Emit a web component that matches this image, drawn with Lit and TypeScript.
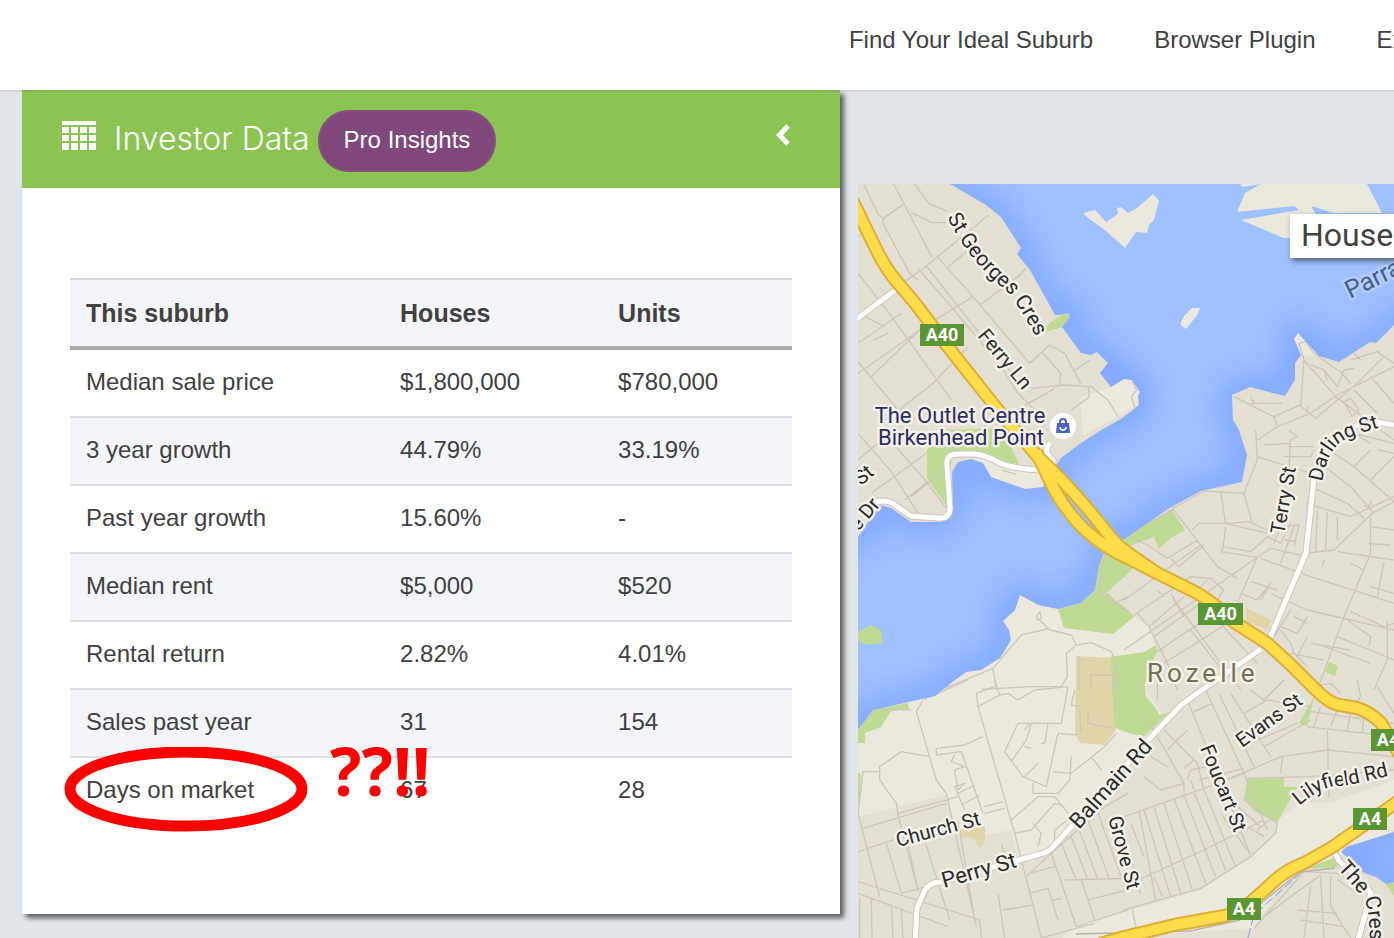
import { LitElement, html, css, svg } from "lit";
import { customElement } from "lit/decorators.js";

const SANS = css`"Liberation Sans", Arial, sans-serif`;

@customElement("site-header")
class SiteHeader extends LitElement {
  static styles = css`
    :host {
      display: block;
      position: relative;
      z-index: 2;
      background: #fff;
      box-shadow: 0 2px 0 rgba(40, 60, 60, 0.08);
      overflow: clip;
      overflow-clip-margin: 2px;
    }
    .nav {
      display: flex;
      gap: 61px;
      height: 90px;
      padding-left: 60.9%;
      font: 24px/80px ${SANS};
      white-space: nowrap;
    }
    .link {
      color: #414141;
      text-decoration: none;
    }
  `;

  render() {
    return html`<nav class="nav" aria-label="Main">
      ${["Find Your Ideal Suburb", "Browser Plugin", "Explore"].map(
        (t) => html`<a class="link" href="#">${t}</a>`
      )}
    </nav>`;
  }
}

const ROWS = [
  ["Median sale price", "$1,800,000", "$780,000"],
  ["3 year growth", "44.79%", "33.19%"],
  ["Past year growth", "15.60%", "-"],
  ["Median rent", "$5,000", "$520"],
  ["Rental return", "2.82%", "4.01%"],
  ["Sales past year", "31", "154"],
  ["Days on market", "67", "28"],
];

@customElement("investor-panel")
class InvestorPanel extends LitElement {
  static styles = css`
    :host {
      display: block;
      background: #fff;
      box-shadow: 4px 4px 5px rgba(0, 0, 0, 0.6);
      font-family: ${SANS};
      color: #414141;
    }
    .bar {
      display: flex;
      align-items: center;
      height: 98px;
      padding: 0 48px 0 40px;
      box-sizing: border-box;
      background: #8bc453;
      color: #fff;
    }
    .grid {
      flex: none;
      margin-bottom: 8px;
    }
    .title {
      margin: 0 8px 0 18px;
      font: 300 32px/44px Inter, ${SANS};
      white-space: nowrap;
    }
    .pro {
      height: 62px;
      margin-top: 4px;
      padding: 0 24px 2px;
      border: 2px solid #87507c;
      border-radius: 31px;
      background: #80477a;
      color: #fff;
      font: 24px/28px ${SANS};
      white-space: nowrap;
    }
    .collapse {
      display: flex;
      margin: 0 0 8px auto;
      padding: 0;
      border: 0;
      background: none;
      color: inherit;
    }
    .body {
      padding: 90px 48px;
    }
    .table {
      width: 100%;
      table-layout: fixed;
      border-collapse: separate;
      border-spacing: 0;
      font-size: 24px;
      line-height: 28px;
    }
    .head {
      box-sizing: border-box;
      padding: 19px 16px;
      text-align: left;
      border-top: 2px solid #d5d8dc;
      border-bottom: 4px solid #aaa;
      background: #f4f5f9;
      font-size: 25px;
    }
    .first {
      width: 43.5%;
    }
    .second {
      width: 30.2%;
    }
    .cell {
      position: relative;
      padding: 18px 16px 20px;
      border-bottom: 2px solid #dcdfe3;
      font-weight: normal;
      text-align: left;
    }
    .row:nth-child(even) .cell {
      background: #f4f5f9;
    }
    .row:last-child .cell {
      border-bottom: 0;
    }
    .ring {
      position: absolute;
      left: -6px;
      top: -11px;
      z-index: 1;
    }
    .shout {
      position: absolute;
      left: 260px;
      top: -24px;
      z-index: 1;
      color: #f00;
      font: 700 66px/72px "Open Sans", sans-serif;
    }
  `;

  render() {
    const cells = [0, 1, 2].flatMap((r) =>
      [0, 1, 2, 3].map(
        (c) => svg`<rect x=${c * 9} y=${6 + r * 8} width="7" height=${r === 2 ? 7 : 6} />`
      )
    );
    return html`
      <header class="bar">
        <svg class="grid" width="34" height="29" fill="#fff" aria-hidden="true">
          <rect width="34" height="4" />
          ${cells}
        </svg>
        <h2 class="title">Investor Data</h2>
        <button class="pro" type="button">Pro Insights</button>
        <button class="collapse" type="button" aria-label="Collapse panel">
          <svg width="18" height="22" viewBox="0 0 18 22" fill="none" stroke="#fff" stroke-width="5">
            <path d="M14 2 5.500 11 14 20" />
          </svg>
        </button>
      </header>
      <div class="body">
        <table class="table">
          <thead>
            <tr>
              <th class="head first" scope="col">This suburb</th>
              <th class="head second" scope="col">Houses</th>
              <th class="head" scope="col">Units</th>
            </tr>
          </thead>
          <tbody>
            ${ROWS.map(
              ([name, houses, units], i) => html`<tr class="row">
                <th class="cell" scope="row">
                  ${name}${i === ROWS.length - 1
                    ? html`<svg class="ring" width="244" height="86" fill="none" stroke="#f00" stroke-width="11" aria-hidden="true">
                          <ellipse cx="122" cy="42" rx="116" ry="37" />
                        </svg>
                        <span class="shout">??!!</span>`
                    : ""}
                </th>
                <td class="cell">${houses}</td>
                <td class="cell">${units}</td>
              </tr>`
            )}
          </tbody>
        </table>
      </div>
    `;
  }
}

const WATER =
  "M950 184 986 205 1001 217 1021 248 1017 254 1030 270 1055 315 1070 314 1062 327 1081 353 1091 355 1097 352 1108 363 1100 373 1111 387 1124 379 1132 380 1140 392 1138 396 1139 405 1124 417 1098 432 1081 443 1061 458 1053 470 1043 487 1025 489 991 477 983 463 971 459 958 462 952 472 953 512 940 522 911 522 891 508 880 505 858 537 800 560 800 735 858 730 873 710 935 696 955 680 966 672 981 670 1000 658 1011 640 1009 630 1003 621 1015 610 1020 595 1038 605 1058 609 1081 603 1095 590 1099 565 1104 553 1126 538 1171 507 1201 491 1242 482 1247 455 1239 430 1233 420 1232 395 1250 387 1285 396 1295 380 1295 363 1301 355 1294 339 1298 333 1319 356 1339 362 1370 342 1376 343 1394 325 1450 290 1450 130 920 130Z";
const BAY = "M1450 815 1394 832 1346 847 1341 852 1354 863 1364 873 1376 877 1386 884 1450 870Z";

const LIGHT = [
  "M858 817 858 725 955 680 1003 655 1011 640 1000 620 1020 593 1060 606 1064 628 1113 634 1132 615 1149 627 1157 650 1146 690 1164 716 1071 827 1048 852 1018 857 1011 830 985 835 960 838 946 795Z",
  "M1062 938 1076 925 1124 912 1201 890 1251 857 1277 832 1277 820 1301 803 1331 803 1394 780 1394 830 1340 855 1304 870 1281 887 1254 928 1190 932 1124 938Z",
  "M1240 184 1243 187 1261 184 1245 193 1237 212 1294 206 1299 210 1241 220 1284 238 1330 238 1311 206 1334 213 1382 213 1367 184Z",
  "M1083 213 1095 210 1106 222 1118 214 1117 208 1121 207 1128 213 1137 208 1153 194 1159 201 1154 220 1149 225 1147 233 1136 232 1125 248 1105 230 1088 218Z",
  "M1181 322 1184 316 1192 308 1200 308 1198 314 1186 329 1181 325Z",
  "M1080 398 1111 387 1124 379 1132 380 1140 392 1138 405 1083 436Z",
  "M1294 339 1298 333 1319 356 1300 355Z",
  "M953 462 971 458 983 463 991 477 1025 489 1043 487 1045 472 1008 469 980 457Z",
];

const PARK = [
  "M1042 333 1042 329 1058 317 1066 313 1070 317 1062 327Z",
  "M927 478 927 450 945 430 1003 428 1019 464 1004 462 979 454 952 455 946 505Z",
  "M858 632 870 625 881 630 883 643 865 645 858 640Z",
  "M858 730 873 710 908 703 909 709 891 711 881 727 865 733 865 743 858 743Z",
  "M858 772 861 775 860 803 858 803Z",
  "M1104 553 1099 565 1095 590 1081 603 1058 609 1064 628 1113 634 1128 622 1134 617 1128 610 1106 593 1132 570 1120 545Z",
  "M1124 538 1171 509 1185 530 1171 538 1159 549 1154 537 1127 547Z",
  "M1110 657 1144 652 1156 645 1157 651 1145 684 1146 697 1156 708 1159 715 1169 712 1154 727 1144 737 1128 733 1113 727Z",
  "M1247 779 1284 778 1284 787 1297 787 1277 823 1256 812 1244 800Z",
  "M1314 697 1299 723 1307 726Z",
  "M1329 662 1338 666 1335 676 1325 672Z",
  "M1305 869 1336 857 1338 867Z",
  "M1386 884 1394 881 1394 896Z",
];

const SAND = [
  "M1076 656 1111 658 1114 727 1116 730 1105 745 1080 743 1075 733Z",
  "M958 830 985 826 985 842 980 849 973 838 960 837Z",
  "M1246 608 1272 620 1267 629 1246 622Z",
];

/* Side streets, one group per map tile; tile units are a third of a pixel. */
const STREETS = [
  {
    x: 858,
    y: 180,
    d: "M17 12 62 105 76 115 135 74M76 115 75 130 155 280 180 300M107 12 222 232M170 12 212 70 270 95M160 97 222 128 265 128M392 105 205 258 120 320M270 260 330 212M205 258 340 430 480 600M238 230 345 350 515 550M180 265 275 375 430 560M345 350 215 430 0 580M370 372 480 290 502 268M0 170 30 150M0 280 90 395 280 660M130 400 0 490M80 440 0 400M90 460 45 480M190 445 40 590M330 500 225 610 110 700M0 545 120 690M515 550 575 495 620 520 668 610M555 520 608 580 605 615M645 575 695 540M520 625 620 615 700 620 750 660 780 710M460 700 590 625M430 560 480 640 530 690M690 620 695 650 640 690",
  },
  {
    x: 1124,
    y: 180,
    d: "M25 605 38 630 22 650 35 690 0 710M330 650 450 710 530 675 540 540 525 490 545 485 570 520 640 570M380 650 390 670 475 670M380 680 390 662M450 710 460 740 560 700 640 645 810 560M460 740 400 780M540 540 635 650 810 780M525 675 575 715 700 610 780 530 810 550M560 555 600 570 640 620 660 570 690 565M600 570 610 600M645 570 680 610M660 665 680 655 705 690 685 710ZM690 630 760 700M680 540 760 515 780 530M710 540 690 520M740 590 810 670M545 700 555 680",
  },
  {
    x: 858,
    y: 430,
    d: "M0 10 100 125 180 250M0 90 60 40M40 190 205 70M70 0 210 160 265 235M160 200 255 120M140 210 210 155M430 120 475 133M740 370 722 490 770 520 810 500M745 490 780 525 810 545M535 560 545 545 550 565 540 570ZM545 570 575 600 640 615 655 645M575 595 490 615 405 715 415 780M405 715 260 775M655 645 700 638 760 665 775 700 780 780M655 645 625 670 628 740 610 770 520 770 370 778M663 680 663 780M700 780 700 735 765 735 765 780M663 690 685 690",
  },
  {
    x: 1124,
    y: 430,
    d: "M395 0 400 90 360 190 240 183 145 235 280 410 340 445M150 238 0 320M400 80 560 130M290 185 305 280 385 275M305 290 295 365M205 300 225 280 305 280 430 310M360 190 385 280 430 300M295 350 380 365 430 320 470 340M290 365 400 382 440 355 530 375M0 310 70 345 130 385 220 330M140 385 165 410 240 345M400 382 0 660M0 510 230 345M400 382 340 520M470 340 500 280M450 340 470 290 525 285 510 350M470 400 510 290M480 330 515 335M410 385 560 440 810 520M380 455 460 480M350 490 400 510 440 460 410 510M440 490 550 540 810 600M500 540 450 620M30 555 200 440 260 445 300 480 280 510M230 470 250 450M40 550 75 590 130 700 160 780M75 590 180 500M100 480 120 500M90 620 230 520M100 665 270 550M120 700 310 580M150 510 350 780M200 600 310 740M250 540 400 700M140 490 180 560M545 220 680 260 810 200M560 240 545 370 630 360 745 250 810 215M580 240 575 365M610 245 605 360M640 260 640 330M560 170 670 220 720 265M590 100 680 170 750 250M600 50 690 110 810 215M690 110 740 60M740 150 810 80M760 60 810 70M740 260 740 370 660 560 580 780M640 365 810 390M740 290 810 300M730 340 800 345M680 400 720 420M780 395 760 500M740 470 810 490M680 545 780 590 810 580M670 570 740 620 735 650M640 620 810 690M600 650 740 700M560 640 680 660M550 560 520 610 470 590 500 540M510 560 550 580M470 600 500 640 510 670 550 710M550 620 520 680M500 670 600 690M790 570 790 690 750 780M480 80 560 80 570 60M490 50 570 50M495 0 520 20 500 30 495 110M420 45 500 40M650 0 810 40M690 10 740 40M600 390 595 410M720 225 730 235 745 210",
  },
  {
    x: 858,
    y: 680,
    d: "M330 0 195 60 175 95 235 300 265 340 355 740M0 115 60 85 160 90M410 0 425 45 360 80 355 40 410 20M360 80 470 460 550 774M425 45 450 40 480 60 530 30 630 20M630 20 610 130 510 130 480 130 440 215 495 290 565 320 600 160 660 165M520 130 505 180 460 245M500 200 520 205M515 130 500 150M570 130 560 190 550 190M500 290 540 250M585 275 640 280 740 200 775 160M640 230 635 300 600 340 525 340 525 310M375 170 320 195 235 205 235 225 310 215 375 400M290 225 280 245 320 260 290 270 300 330 320 310 290 320 320 390M300 340 350 315M310 375 365 345M215 230 130 215 65 260 65 300 115 370 120 405 180 630M0 400 15 275 65 275M15 445 265 370M0 515 120 475M0 400 65 650M380 380 435 365M380 400 440 385M85 490 130 640M150 490 180 635M200 480 275 720M120 400 300 350M300 420 350 720M430 495 445 540M0 605 365 720 370 774M0 640 270 740M130 640 220 615M5 655 5 774M40 655 42 774M100 680 105 774M130 690 135 774M420 640 440 774M435 690 525 675M470 460 520 450 590 370 620 380M460 420 540 350 590 350 630 400M525 430 550 460 540 500M590 490 590 450 640 410M510 580 590 560M505 590 590 510 740 380 810 340M580 520 655 740 810 690M610 490 655 600M640 470 690 600M660 440 720 600M690 420 755 600M720 400 790 590M620 600 810 595M670 600 710 720M690 660 810 630M515 640 570 625 600 720M550 774 710 730M585 660 610 655M700 230 730 270M650 30 640 75 665 80M665 90 670 160M690 90 690 130 770 145",
  },
  {
    x: 1124,
    y: 680,
    d: "M0 410 240 325 355 280 470 230 610 210 810 230M230 20 175 75M190 60 380 525M245 30 360 280 430 450M285 40 390 260M320 40 440 230M120 150 220 250 240 330M60 100 180 310 180 340M60 290 110 330 180 310M80 230 130 260M130 210 190 150M180 265 210 240M210 95 265 70M360 100 430 60 560 80M400 180 520 130M420 200 560 120M380 30 420 60 480 0M560 95 810 130M550 140 810 170M590 80 570 140M640 90 620 140M680 95 670 155M720 100 715 160M610 150 615 355M475 230 470 280M370 295 560 290 810 270M190 300 200 270 250 260M200 300 210 330M225 300 360 265M240 325 360 280M0 620 240 510 420 420M60 390 140 650M90 380 170 640M120 370 205 630M150 355 245 610M180 345 275 590M210 335 305 570M20 430 60 530M45 390 95 660M0 460 50 640M240 330 335 560M290 400 380 525M330 370 410 440M370 440 420 470M400 450 450 410M360 360 460 430 455 460 380 530 230 625 0 690M25 690 40 760M390 745 540 575 640 580 740 640M420 710 500 650 590 585M560 620 540 774M590 590 600 774M520 690 640 700M530 720 660 740M620 590 620 680 680 774M640 600 700 640M90 590 115 650M100 0 100 60M700 0 710 50 690 80M760 20 810 100M560 20 620 10 650 40",
  },
];

interface Label {
  t: string;
  x: number;
  y: number;
  r: number;
  major?: boolean;
}

const LABELS: Label[] = [
  { t: "Ferry Ln", x: 977, y: 336, r: 50 },
  { t: "Terry St", x: 1284, y: 535, r: -80 },
  { t: "Evans St", x: 1242, y: 748, r: -36 },
  { t: "Foucart St", x: 1200, y: 748, r: 68 },
  { t: "Balmain Rd", x: 1079, y: 830, r: -48, major: true },
  { t: "Grove St", x: 1108, y: 818, r: 75 },
  { t: "Church St", x: 898, y: 847, r: -15 },
  { t: "Perry St", x: 944, y: 888, r: -16, major: true },
  { t: "St", x: 861, y: 486, r: -40 },
  { t: "e Dr", x: 858, y: 532, r: -50 },
];

const SHIELDS = [
  { t: "A40", x: 920, y: 324, w: 44 },
  { t: "A40", x: 1198, y: 603, w: 45 },
  { t: "A4", x: 1371, y: 729, w: 34 },
  { t: "A4", x: 1353, y: 808, w: 34 },
  { t: "A4", x: 1227, y: 898, w: 34 },
];

const HIGHWAYS =
  "M850 196 858 212 878 253Q886 269 897 282L915 303 948 347 998 410 1038 457Q1072 488 1105 530 1115 544 1128 553L1157 573 1197 593Q1214 603 1234 622L1267 643 1291 665 1316 690Q1330 704 1340 705L1357 708Q1370 712 1381 723L1400 755M1036 452 1044 468Q1060 506 1085 530 1105 548 1128 558L1157 573M1400 800 1331 848 1304 863Q1282 872 1270 885L1251 902Q1240 912 1224 916L1174 925 1124 937 1100 944";
const WHITE_ROADS =
  "M850 324 898 288M876 502Q888 499 895 505L911 516 938 518Q950 519 950 508L947 465Q946 454 957 454L975 454Q985 455 1000 463 1010 468 1040 470M1050 443Q1042 452 1053 460L1053 468M1394 425 1371 421 1350 428Q1325 438 1314 478L1306 553 1269 640M1261 649 1202 690 1181 705 1151 737 1071 827 1052 848Q1048 852 1040 854L941 882Q930 882 925 890L917 908 915 944M1334 848Q1336 862 1348 868L1371 893 1357 944";

@customElement("suburb-map")
class SuburbMap extends LitElement {
  static styles = css`
    :host {
      display: block;
      position: relative;
      overflow: hidden;
      background: #e3dfd3;
    }
    .canvas {
      position: absolute;
      inset: 0;
      width: 100%;
      height: 100%;
      font-family: Roboto, sans-serif;
      font-size: 20px;
    }
    .land {
      fill: #ebe9de;
    }
    .park {
      fill: #bfdb93;
    }
    .sand {
      fill: #e0d5a9;
    }
    .water {
      fill: #a0c1ff;
    }
    .shore {
      fill: none;
      stroke: #7ba2ff;
      stroke-width: 24px;
      filter: blur(16px);
    }
    .street {
      fill: none;
      stroke: #cdc5ba;
      stroke-width: 4px;
      stroke-linejoin: round;
    }
    .line {
      fill: none;
      stroke-linejoin: round;
    }
    .label {
      fill: #2b2b2b;
      stroke: #f3f1ea;
      stroke-width: 5px;
      stroke-linejoin: round;
      paint-order: stroke;
    }
    .curved {
      font-size: 21px;
    }
    .major {
      font-size: 22px;
    }
    .poi {
      fill: #2c2c63;
      font-size: 22px;
      text-anchor: middle;
    }
    .river {
      fill: #44618f;
      stroke: #b4cdfc;
      font-size: 25px;
    }
    .suburb {
      fill: #77714f;
      font-size: 26px;
      letter-spacing: 4px;
    }
    .shield {
      fill: #fff;
      font-size: 18px;
      font-weight: 700;
      text-anchor: middle;
    }
    .popup {
      position: absolute;
      top: 30px;
      left: 432px;
      padding: 0 11px 2px;
      background: #fff;
      box-shadow: 2px 3px 6px rgba(0, 0, 0, 0.5);
      color: #414141;
      font: 32px/42px Roboto, sans-serif;
    }
  `;

  render() {
    const shapes = (list: string[], cls: string) => list.map((d) => svg`<path class=${cls} d=${d} />`);
    return html`
      <svg class="canvas" viewBox="858 184 536 754" preserveAspectRatio="xMinYMin slice" role="img" aria-label="Map of Rozelle">
        <defs>
          <clipPath id="sea"><path d=${WATER} /><path d=${BAY} /></clipPath>
          <path id="georges" d="M947 217Q962 246 979 265T1006 290Q1018 304 1035 335L1060 380" />
          <path id="darling" d="M1322 482Q1327 452 1341 442T1440 412" />
          <path id="lilyfield" d="M1299 806Q1322 786 1338 786T1440 762" />
          <path id="crescent" d="M1337 868Q1357 890 1364 899T1370 970L1370 1040" />
        </defs>
        ${shapes([LIGHT[0], LIGHT[1], LIGHT[5], LIGHT[6], LIGHT[7]], "land")}
        ${shapes(PARK, "park")} ${shapes(SAND, "sand")}
        ${STREETS.map(
          (s) => svg`<path class="street" transform="translate(${s.x} ${s.y}) scale(.3333)" d=${s.d} />`
        )}
        <g clip-path="url(#sea)">
          <path class="water" d=${WATER} /><path class="water" d=${BAY} />
          <path class="shore" d=${WATER} /><path class="shore" d=${BAY} />
        </g>
        ${shapes([LIGHT[2], LIGHT[3], LIGHT[4]], "land")} ${shapes([PARK[2], PARK[0]], "park")}
        <path class="line" d="M1248 938 1254 915 1304 870" stroke="#78a0ec" stroke-width="1" stroke-dasharray="10 3" />
        <path class="line" d="M1076 934 1190 931 1240 920 1300 872 1335 868" stroke="#b8b4ac" stroke-width="1.500" />
        <path class="line" d=${WHITE_ROADS} stroke="#cdc5ba" stroke-width="7" />
        <path class="line" d=${WHITE_ROADS} stroke="#fff" stroke-width="5" />
        <path class="line" d=${HIGHWAYS} stroke="#dfaf35" stroke-width="14" />
        <path class="line" d=${HIGHWAYS} stroke="#ffdc4a" stroke-width="10" />

        <text class="label curved"><textPath href="#georges">St Georges Cres</textPath></text>
        <text class="label"><textPath href="#darling">Darling St</textPath></text>
        <text class="label"><textPath href="#lilyfield">Lilyfield Rd</textPath></text>
        <text class="label curved"><textPath href="#crescent">The Crescent</textPath></text>
        ${LABELS.map(
          (l) => svg`<text class=${l.major ? "label major" : "label"} x=${l.x} y=${l.y} transform="rotate(${l.r} ${l.x} ${l.y})">${l.t}</text>`
        )}
        <text class="label river" x="1350" y="299" transform="rotate(-26 1350 299)">Parramatta River</text>
        <text class="label suburb" x="1147" y="682">Rozelle</text>
        <text class="label poi" x="960" y="423">The Outlet Centre</text>
        <text class="label poi" x="961" y="445">Birkenhead Point</text>

        <circle cx="1063" cy="426" r="13" fill="#fff" />
        <path d="M1057 423H1069L1070 433H1056Z" fill="#4d62c0" />
        <path d="M1060 424V422A3 3 0 0 1 1066 422V424" fill="none" stroke="#4d62c0" stroke-width="2" />
        <path d="M1060 427A3 3 0 0 0 1066 427" fill="none" stroke="#fff" stroke-width="1.500" />

        ${SHIELDS.map(
          (s) => svg`<rect x=${s.x} y=${s.y} width=${s.w} height="22" fill="#5a9632" />
            <text class="shield" x=${s.x + s.w / 2} y=${s.y + 17}>${s.t}</text>`
        )}
      </svg>
      <div class="popup">Houses</div>
    `;
  }
}

@customElement("app-root")
class AppRoot extends LitElement {
  static styles = css`
    :host {
      display: flex;
      flex-direction: column;
      min-height: 100vh;
      overflow: hidden;
      background: #e1e6ea;
    }
    .main {
      flex: 1;
      display: grid;
      grid-template-columns: minmax(0, 818fr) minmax(0, 536fr);
      gap: 18px;
      padding-left: 22px;
    }
    .panel {
      align-self: start;
      margin-bottom: 24px;
    }
    .map {
      margin-top: 94px;
    }
  `;

  render() {
    return html`
      <site-header></site-header>
      <main class="main">
        <investor-panel class="panel"></investor-panel>
        <suburb-map class="map"></suburb-map>
      </main>
    `;
  }
}
